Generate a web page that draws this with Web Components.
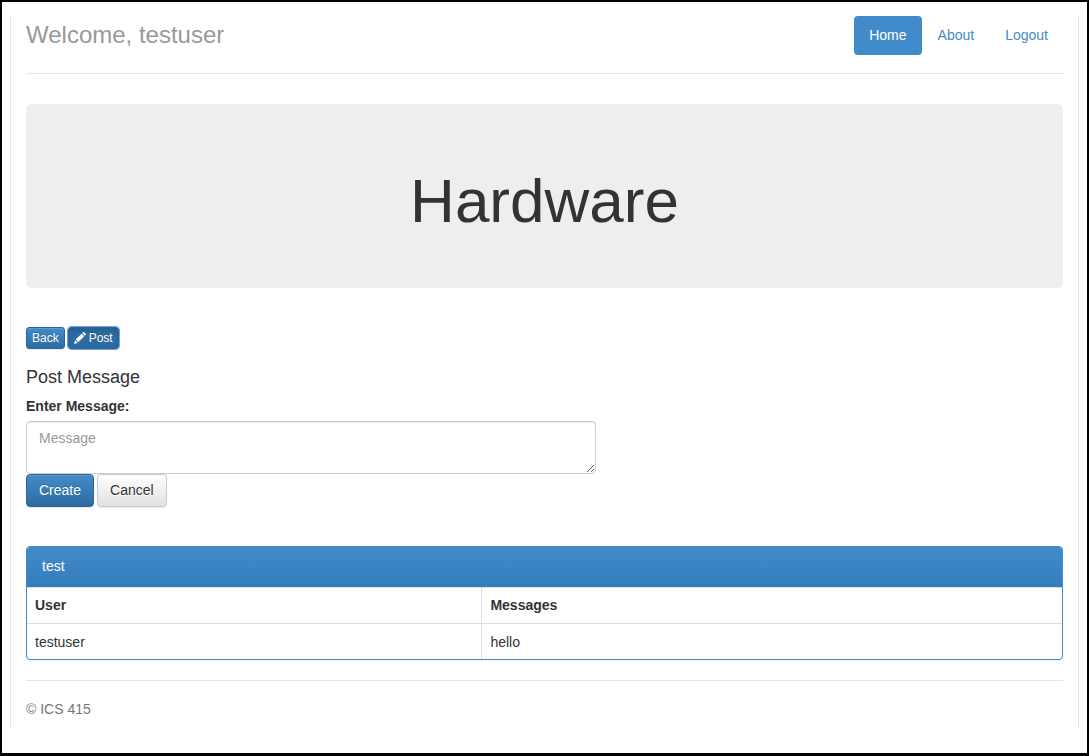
<!DOCTYPE html>
<html lang="en">
<head>
<meta charset="utf-8">
<title>Hardware</title>
<style>
  html { height: 100%; }
  body {
    margin: 0; min-height: 100%; box-sizing: border-box;
    border: 2px solid #000; border-bottom-width: 3px;
    padding: 14px 8px 24px; background: #fff; color: #333;
    font: 14px/20px "Liberation Sans", Arial, sans-serif;
  }
</style>
</head>
<body>
<board-page>
  <site-header slot="header" user="testuser">
    <nav-link href="#home" active>Home</nav-link>
    <nav-link href="#about">About</nav-link>
    <nav-link href="#logout">Logout</nav-link>
  </site-header>
  <page-banner>Hardware</page-banner>
  <board-toolbar></board-toolbar>
  <message-form></message-form>
  <message-panel heading="test"></message-panel>
  <span slot="footer">© ICS 415</span>
</board-page>

<script>
const define = (name, html, setup) => {
  const template = document.createElement('template');
  template.innerHTML = html;
  customElements.define(name, class extends HTMLElement {
    constructor() {
      super();
      this.attachShadow({ mode: 'open' }).append(template.content.cloneNode(true));
    }
    connectedCallback() { if (setup) setup(this, this.shadowRoot); }
  });
};

define('board-page', `
  <style>
    :host { display: block; border: solid #e5e5e5; border-width: 0 1px; padding: 0 15px; }
    footer { border-top: 1px solid #e5e5e5; margin-top: 20px; padding: 18px 0 10px; color: #777; }
  </style>
  <slot name="header"></slot>
  <main><slot></slot></main>
  <footer><slot name="footer"></slot></footer>`);

define('site-header', `
  <style>
    :host { display: flex; justify-content: space-between; align-items: flex-start;
      padding-bottom: 18px; border-bottom: 1px solid #e5e5e5; }
    h3 { margin: 0; font-size: 24px; line-height: 38px; font-weight: 400; color: #999; }
    nav { display: flex; gap: 1px; }
  </style>
  <h3></h3>
  <nav><slot></slot></nav>`,
  (el, root) => { root.querySelector('h3').textContent = 'Welcome, ' + el.getAttribute('user'); });

define('nav-link', `
  <style>
    :host { display: block; }
    a { display: block; padding: 10px 15px; line-height: 19px; border-radius: 4px;
      color: #428bca; text-decoration: none; }
    :host([active]) a { background: #428bca; color: #fff; }
  </style>
  <a><slot></slot></a>`,
  (el, root) => { root.querySelector('a').href = el.getAttribute('href'); });

define('page-banner', `
  <style>
    :host { display: block; margin-top: 30px; padding: 62px 60px 53px; border-radius: 6px;
      background: #eee; text-align: center; }
    h1 { margin: 0; font-size: 62px; line-height: 69px; font-weight: 400; }
  </style>
  <h1><slot></slot></h1>`);

const buttonStyle = `
    button { font: inherit; line-height: 20px; padding: 5px 12px 6px; margin: 0;
      border: 1px solid #2b669a; border-radius: 4px; color: #fff;
      background: linear-gradient(#428bca, #2d6ca2);
      box-shadow: inset 0 1px 0 rgba(255,255,255,.15), 0 1px 1px rgba(0,0,0,.08);
      text-shadow: 0 -1px 0 rgba(0,0,0,.2); }`;

define('board-toolbar', `
  <style>
    :host { display: flex; gap: 3px; margin-top: 39px; }
    ${buttonStyle}
    button { display: flex; align-items: center; gap: 3px; font-size: 12px; line-height: 18px;
      padding: 1px 5px; border-radius: 3px; }
    .pressed { background: #2d6ca2; box-shadow: inset 0 3px 5px rgba(0,0,0,.13);
      outline: 1px solid #6ea0ee; outline-offset: 0; border-color: #2b669a; }
    svg { display: block; width: 12px; height: 12px; fill: #fff; }
  </style>
  <button type="button">Back</button>
  <button type="button" class="pressed"><svg viewBox="0 0 13 13" aria-hidden="true"><path d="M0 13 1.2 9 4 11.8zM1.8 8.2 8.3 1.9 11.1 4.7 4.7 11.1zM9 1.2 9.9.3Q10.4-.1 10.9.3L12.7 2.1Q13.1 2.6 12.7 3.1L11.8 4z"/></svg>Post</button>`);

define('message-form', `
  <style>
    :host { display: block; margin-top: 18px; }
    h4 { margin: 0; font-size: 18px; line-height: 20px; font-weight: 400; }
    label { display: block; margin: 9px 0 5px; font-weight: 700; }
    textarea { display: block; box-sizing: border-box; width: 55%; height: 53px; margin: 0;
      padding: 6px 12px; font: inherit; color: #555; background: #fff;
      border: 1px solid #ccc; border-radius: 4px; box-shadow: inset 0 1px 1px rgba(0,0,0,.075); }
    textarea::placeholder { color: #999; opacity: 1; }
    .actions { display: flex; gap: 3px; }
    ${buttonStyle}
    .plain { color: #333; border-color: #ccc; background: linear-gradient(#fff, #e0e0e0); text-shadow: 0 1px 0 #fff; }
  </style>
  <form>
    <h4>Post Message</h4>
    <label for="message">Enter Message:</label>
    <textarea id="message" placeholder="Message"></textarea>
    <div class="actions">
      <button type="submit">Create</button>
      <button type="button" class="plain">Cancel</button>
    </div>
  </form>`,
  (el, root) => { root.querySelector('form').addEventListener('submit', e => e.preventDefault()); });

define('message-panel', `
  <style>
    :host { display: block; margin-top: 39px; border: 1px solid #428bca; border-radius: 4px;
      box-shadow: 0 1px 2px rgba(0,0,0,.05); overflow: hidden; }
    header { padding: 9px 15px 11px; color: #fff; background: linear-gradient(#428bca, #357ebd); }
    table { width: 100%; border-collapse: separate; border-spacing: 0; table-layout: fixed; }
    th, td { padding: 8px; line-height: 19px; text-align: left; border-top: 1px solid #ddd; }
    td { padding: 9px 8px 7px; }
    th:first-child, td:first-child { width: 44%; border-right: 1px solid #ddd; box-sizing: border-box; }
  </style>
  <header></header>
  <table>
    <thead><tr><th scope="col">User</th><th scope="col">Messages</th></tr></thead>
    <tbody><tr><td>testuser</td><td>hello</td></tr></tbody>
  </table>`,
  (el, root) => { root.querySelector('header').textContent = el.getAttribute('heading'); });
</script>
</body>
</html>
